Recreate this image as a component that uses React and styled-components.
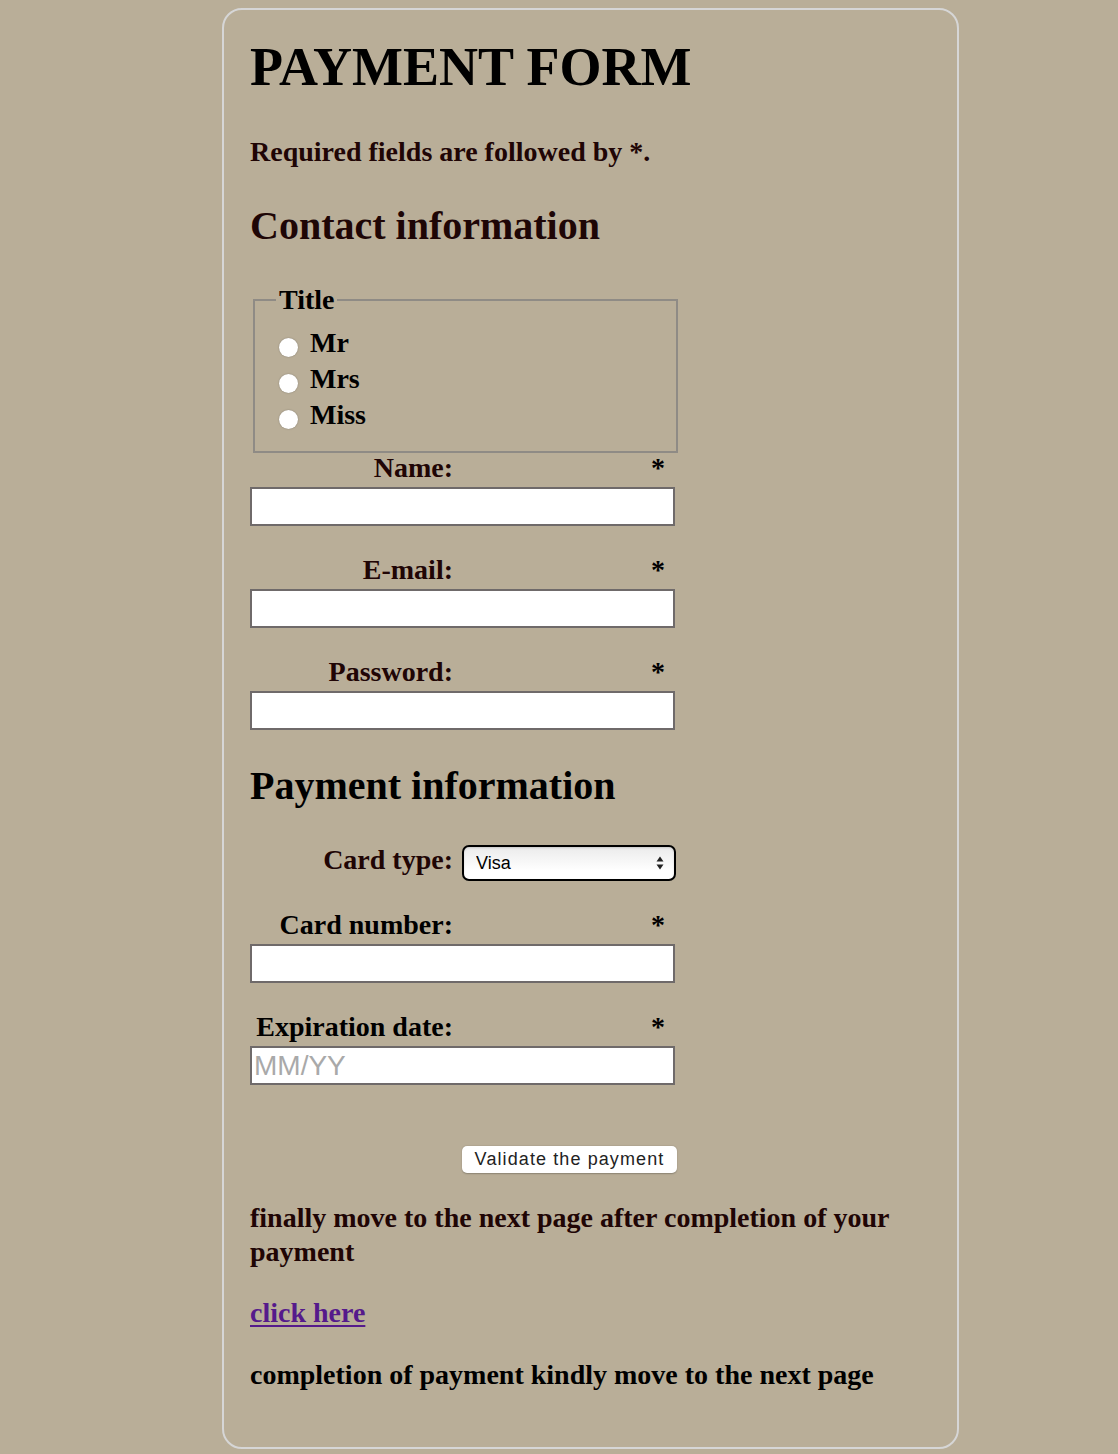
import React from "react";
import styled, { createGlobalStyle } from "styled-components";

const GlobalStyle = createGlobalStyle`
  html, body {
    margin: 0;
    padding: 0;
    background: #b9ae98;
  }
  body {
    font-family: "Liberation Serif", "Times New Roman", serif;
    color: #200505;
  }
`;

const Card = styled.form`
  box-sizing: border-box;
  width: 737px;
  margin: 8px 0 6px 222px;
  padding: 0 26px 55px;
  border: 2px solid #d6d6d6;
  border-radius: 20px;
`;

const Title = styled.h1`
  margin: 27px 0 0;
  font-size: 54px;
  line-height: 60px;
  font-weight: 700;
  color: #000;
`;

const Text = styled.p`
  margin: ${(p) => p.$top || 28}px 0 0;
  font-size: 28px;
  line-height: 34px;
  font-weight: 700;
  color: ${(p) => p.$color || "#200505"};
`;

const Section = styled.h2`
  margin: ${(p) => p.$top}px 0 0;
  font-size: 40px;
  line-height: 46px;
  font-weight: 700;
  color: ${(p) => p.$color || "#1e0606"};
`;

const Fieldset = styled.fieldset`
  box-sizing: border-box;
  width: 425px;
  margin: 34px 0 0 3px;
  padding: 8px 0 18px 21px;
  border: 2px solid #8f8b85;
`;

const Legend = styled.legend`
  padding: 0 3px;
  font-size: 28px;
  line-height: 34px;
  font-weight: 700;
  color: #000;
`;

const RadioRow = styled.label`
  display: flex;
  align-items: flex-start;
  height: 36px;
  font-size: 28px;
  line-height: 36px;
  font-weight: 700;
  color: #000;
`;

const Radio = styled.input.attrs({ type: "radio" })`
  appearance: none;
  width: 19px;
  height: 19px;
  margin: 13px 12px 0 3px;
  border-radius: 50%;
  background: #fff;
  box-shadow: 0 0 1.5px rgba(0, 0, 0, 0.35);
`;

const Field = styled.div`
  width: 425px;
  margin-top: ${(p) => p.$top}px;
`;

const LabelRow = styled.div`
  display: flex;
  align-items: flex-start;
  height: 30px;
  font-size: 28px;
  line-height: 30px;
  font-weight: 700;
`;

const Label = styled.label`
  width: 203px;
  flex: none;
  text-align: right;
  color: ${(p) => p.$color || "#200505"};
`;

const Required = styled.abbr`
  margin-left: auto;
  margin-right: 10px;
  color: #000;
  text-decoration: none;
`;

const TextInput = styled.input`
  display: block;
  box-sizing: border-box;
  width: 425px;
  height: 39px;
  margin-top: 4px;
  padding: 0 2px;
  border: 2px solid #6f6a6a;
  background: #fff;
  font-family: "Liberation Sans", Arial, sans-serif;
  font-size: 28px;
  outline: none;

  &::placeholder {
    color: #a9a9a9;
  }
`;

const SelectRow = styled.div`
  display: flex;
  align-items: flex-start;
  gap: 9px;
  height: 36px;
  margin-top: 36px;
  font-size: 28px;
  line-height: 30px;
  font-weight: 700;
`;

const SelectWrap = styled.span`
  position: relative;
  display: block;
  width: 214px;
  height: 36px;
`;

const Select = styled.select`
  appearance: none;
  box-sizing: border-box;
  width: 100%;
  height: 100%;
  padding: 0 26px 0 12px;
  border: 2px solid #000;
  border-radius: 7px;
  background: linear-gradient(#ebebeb, #ffffff 75%);
  box-shadow: inset 0 1px 2px rgba(0, 0, 0, 0.15);
  font-family: "Liberation Sans", Arial, sans-serif;
  font-size: 18px;
  color: #000;
  outline: none;
`;

const Arrows = styled.svg`
  position: absolute;
  right: 12px;
  top: 11px;
  pointer-events: none;
`;

const ButtonRow = styled.div`
  margin: 61px 0 0 212px;
`;

const Button = styled.button`
  box-sizing: border-box;
  width: 215px;
  height: 27px;
  padding: 0;
  border: none;
  border-radius: 5px;
  background: #fff;
  box-shadow: 0 0.5px 1.5px rgba(0, 0, 0, 0.25);
  font-family: "Liberation Sans", Arial, sans-serif;
  font-size: 18px;
  letter-spacing: 1.1px;
  color: #222;
`;

const Link = styled.a`
  color: #551a8b;
  text-decoration: underline;
  text-underline-offset: 3px;
`;

const fields = [
  { id: "name", label: "Name:", type: "text", top: 0 },
  { id: "mail", label: "E-mail:", type: "email", top: 29 },
  { id: "pwd", label: "Password:", type: "password", top: 29 },
];

const cardFields = [
  { id: "number", label: "Card number:", top: 29, color: "#000" },
  { id: "date", label: "Expiration date:", top: 29, color: "#000", placeholder: "MM/YY" },
];

const RequiredField = ({ id, label, type = "text", top, color, placeholder }) => (
  <Field $top={top}>
    <LabelRow>
      <Label htmlFor={id} $color={color}>{label}</Label>
      <Required title="required">*</Required>
    </LabelRow>
    <TextInput id={id} type={type} placeholder={placeholder} />
  </Field>
);

const App = () => (
  <>
    <GlobalStyle />
    <Card onSubmit={(e) => e.preventDefault()}>
      <Title>PAYMENT FORM</Title>
      <Text $top={38}>Required fields are followed by *.</Text>

      <Section $top={34}>Contact information</Section>
      <Fieldset>
        <Legend>Title</Legend>
        {["Mr", "Mrs", "Miss"].map((t) => (
          <RadioRow key={t}>
            <Radio name="title" value={t} />
            {t}
          </RadioRow>
        ))}
      </Fieldset>
      {fields.map((f) => (
        <RequiredField key={f.id} {...f} />
      ))}

      <Section $top={33} $color="#000">Payment information</Section>
      <SelectRow>
        <Label htmlFor="card">Card type:</Label>
        <SelectWrap>
          <Select id="card" defaultValue="visa">
            <option value="visa">Visa</option>
            <option value="mc">Mastercard</option>
            <option value="amex">American Express</option>
          </Select>
          <Arrows width="8" height="14" viewBox="0 0 8 14">
            <path d="M4 0.5 L7.5 5.5 H0.5 Z" fill="#222" />
            <path d="M4 13.5 L7.5 8.5 H0.5 Z" fill="#222" />
          </Arrows>
        </SelectWrap>
      </SelectRow>
      {cardFields.map((f) => (
        <RequiredField key={f.id} {...f} />
      ))}

      <ButtonRow>
        <Button type="submit">Validate the payment</Button>
      </ButtonRow>

      <Text $top={28}>finally move to the next page after completion of your payment</Text>
      <Text $top={27}>
        <Link href="#">click here</Link>
      </Text>
      <Text $top={28} $color="#000">completion of payment kindly move to the next page</Text>
    </Card>
  </>
);

export default App;
